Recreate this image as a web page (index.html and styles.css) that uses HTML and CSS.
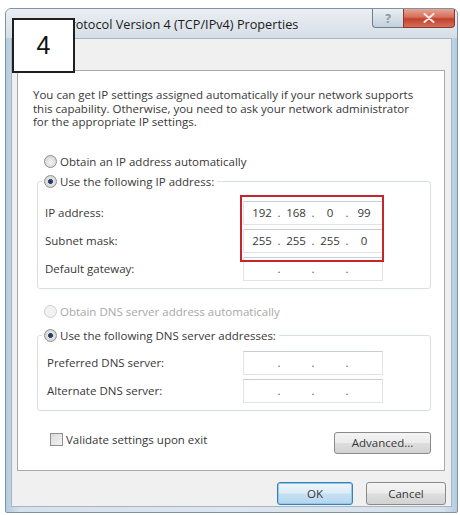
FILE: index.html
```html
<!DOCTYPE html>
<html>
<head>
<meta charset="utf-8">
<link rel="stylesheet" href="styles.css">
</head>
<body>
<div class="window">
  <div class="titlebar">
    <span class="title">Internet Protocol Version 4 (TCP/IPv4) Properties</span>
    <div class="caption-btns">
      <span class="cbtn help">?</span>
      <span class="cbtn close">
        <svg width="12" height="10" viewBox="0 0 12 10"><path d="M1.5 1 L10.5 9 M10.5 1 L1.5 9" stroke="#fbeae6" stroke-width="2" stroke-linecap="round" fill="none"/></svg>
      </span>
    </div>
  </div>
  <div class="client">
    <div class="panel">
      <p class="desc">You can get IP settings assigned automatically if your network supports<br>this capability. Otherwise, you need to ask your network administrator<br>for the appropriate IP settings.</p>
      <div class="opt first"><span class="radio"></span>Obtain an IP address automatically</div>
      <fieldset class="group ip-group">
        <legend class="opt"><span class="radio on"></span>Use the following IP address:</legend>
        <div class="rows ip-rows">
          <div class="row"><span class="lbl">IP address:</span><span class="field marked"><span class="oct">192</span><span class="dot">.</span><span class="oct">168</span><span class="dot">.</span><span class="oct">0</span><span class="dot">.</span><span class="oct">99</span></span></div>
          <div class="row"><span class="lbl">Subnet mask:</span><span class="field marked"><span class="oct">255</span><span class="dot">.</span><span class="oct">255</span><span class="dot">.</span><span class="oct">255</span><span class="dot">.</span><span class="oct">0</span></span></div>
          <div class="row"><span class="lbl">Default gateway:</span><span class="field"><span class="oct"></span><span class="dot">.</span><span class="oct"></span><span class="dot">.</span><span class="oct"></span><span class="dot">.</span><span class="oct"></span></span></div>
        </div>
      </fieldset>
      <div class="opt disabled dns-auto"><span class="radio"></span>Obtain DNS server address automatically</div>
      <fieldset class="group dns-group">
        <legend class="opt"><span class="radio on"></span>Use the following DNS server addresses:</legend>
        <div class="rows dns-rows">
          <div class="row"><span class="lbl">Preferred DNS server:</span><span class="field"><span class="oct"></span><span class="dot">.</span><span class="oct"></span><span class="dot">.</span><span class="oct"></span><span class="dot">.</span><span class="oct"></span></span></div>
          <div class="row"><span class="lbl">Alternate DNS server:</span><span class="field"><span class="oct"></span><span class="dot">.</span><span class="oct"></span><span class="dot">.</span><span class="oct"></span><span class="dot">.</span><span class="oct"></span></span></div>
        </div>
      </fieldset>
      <div class="footer-row">
        <label class="check"><span class="box"></span>Validate settings upon exit</label>
        <button class="btn adv">Advanced...</button>
      </div>
    </div>
    <div class="actions">
      <button class="btn ok">OK</button>
      <button class="btn cancel">Cancel</button>
    </div>
  </div>
</div>
<div class="step">4</div>
<div class="mark"></div>
</body>
</html>
```

FILE: styles.css
```css
* { box-sizing: border-box; }

body {
  margin: 0;
  background: #ffffff;
  font-family: "Open Sans", "Liberation Sans", sans-serif;
  font-size: 11.5px;
  color: #383838;
}

.window {
  margin: 8px 0 0 5px;
  width: 453px;
  height: 505px;
  border: 1px solid #7f93a7;
  border-radius: 6px 6px 2px 2px;
  background: linear-gradient(90deg, #b5cbe0 0%, #d5e1ec 3%, #dde6ee 50%, #d5e1ec 97%, #b5cbe0 100%);
  padding: 0 5px 5px 5px;
  display: flex;
  flex-direction: column;
}

.titlebar {
  height: 29px;
  display: flex;
  align-items: flex-start;
  background: linear-gradient(180deg, #eaeef2 0%, #dfe5eb 60%, #d6dee6 100%);
  margin: 0 -5px;
  padding-left: 6px;
  border-radius: 5px 5px 0 0;
}

.title {
  font-size: 12.7px;
  color: #1b1b1b;
  line-height: 30px;
}

.caption-btns {
  margin-left: auto;
  margin-right: 2px;
  display: flex;
}

.cbtn {
  height: 19px;
  display: flex;
  align-items: center;
  justify-content: center;
  border: 1px solid #6d7f92;
  border-top: none;
}

.help {
  width: 31px;
  border-radius: 0 0 0 4px;
  background: linear-gradient(180deg, #e9eef3 0%, #d6dfe7 50%, #c4d0db 100%);
  color: #8a97a4;
  font-size: 12px;
  font-weight: bold;
  border-right: none;
}

.close {
  width: 52px;
  border-radius: 0 0 4px 0;
  background: linear-gradient(180deg, #e7a597 0%, #d66f5b 45%, #c2402b 55%, #d2705a 100%);
  border-color: #8a3a2e;
}

.client {
  flex: 1;
  background: #f0f0f0;
  border: 1px solid #a7b4c1;
  padding: 31px 0 0 5px;
  display: flex;
  flex-direction: column;
}

.panel {
  width: 428px;
  height: 401px;
  background: #ffffff;
  border: 1px solid #a6a9ae;
}

.desc {
  margin: 17px 0 0 15px;
  line-height: 13.5px;
}

.opt {
  display: flex;
  align-items: center;
  height: 16px;
  line-height: 16px;
}

.opt.first {
  margin: 25px 0 0 26px;
}

.radio {
  width: 13px;
  height: 13px;
  border-radius: 50%;
  border: 1px solid #8e8f8f;
  background: radial-gradient(circle at 50% 60%, #f4f4f4 0%, #dcdcdc 60%, #c8c8c8 100%);
  margin-right: 3px;
  flex: none;
}

.radio.on {
  background: radial-gradient(circle, #24354c 0%, #2f4a6b 28%, #e2e2e2 36%, #cfcfcf 100%);
}

.opt.disabled {
  color: #a8a8a8;
}

.opt.disabled .radio {
  border-color: #cfcfcf;
  background: #f2f2f2;
}

.group {
  border: 1px solid #d9dee3;
  border-radius: 3px;
  margin: 4px 13px 0 19px;
  padding: 0 0 0 7px;
  min-width: 0;
}

.group legend {
  margin-left: -3px;
  padding: 0 3px 0 2px;
}

.rows {
  display: flex;
  flex-direction: column;
}

.ip-rows { padding: 9px 0 5px 0; }
.dns-rows { padding: 5px 0 5px 2px; }

.row {
  height: 28px;
  display: flex;
  align-items: center;
}

.lbl {
  width: 198px;
}

.dns-rows .lbl { width: 196px; }

.field {
  width: 140px;
  height: 24px;
  background: #ffffff;
  border: 1px solid #e0e4e8;
  border-top-color: #c9ced4;
  display: flex;
  align-items: center;
  padding-left: 6px;
}

.oct {
  width: 24px;
  text-align: center;
}

.dot {
  width: 10px;
  text-align: center;
}

.field .dot { color: #555; }

.dns-auto {
  margin: 15px 0 0 26px;
}

.dns-group {
  margin-top: 8px;
}

.footer-row {
  margin: 21px 13px 0 32px;
  display: flex;
  align-items: flex-start;
  justify-content: space-between;
}

.check {
  display: flex;
  align-items: center;
  line-height: 13px;
  margin-top: 1px;
}

.box {
  width: 13px;
  height: 13px;
  border: 1px solid #8e8f8f;
  background: linear-gradient(135deg, #dcdcdc 0%, #f2f2f2 100%);
  margin-right: 3px;
}

.btn {
  font-family: "Open Sans", "Liberation Sans", sans-serif;
  font-size: 11.5px;
  color: #383838;
  height: 23px;
  border: 1px solid #8a8a8a;
  border-radius: 3px;
  background: linear-gradient(180deg, #f4f4f4 0%, #ececec 48%, #dedede 52%, #d2d2d2 100%);
  padding: 0;
}

.adv {
  width: 97px;
  height: 22px;
}

.actions {
  display: flex;
  justify-content: flex-end;
  gap: 13px;
  margin: 11px 5px 0 0;
}

.ok {
  width: 76px;
  border-color: #3c7fb1;
  background: linear-gradient(180deg, #eef6fb 0%, #dcecf7 48%, #c6e0f2 52%, #b5d6ee 100%);
  box-shadow: inset 0 0 0 1px #8fc8ee;
}

.cancel {
  width: 80px;
}

.step {
  position: absolute;
  left: 12px;
  top: 18px;
  width: 63px;
  height: 55px;
  background: #ffffff;
  border: 2px solid #1f1f1f;
  display: flex;
  align-items: center;
  justify-content: center;
  font-family: "Liberation Sans", Arial, sans-serif;
  font-size: 25px;
  color: #111;
}

.mark {
  position: absolute;
  left: 240px;
  top: 195px;
  width: 144px;
  height: 67px;
  border: 2px solid #c8242c;
  pointer-events: none;
}
```
